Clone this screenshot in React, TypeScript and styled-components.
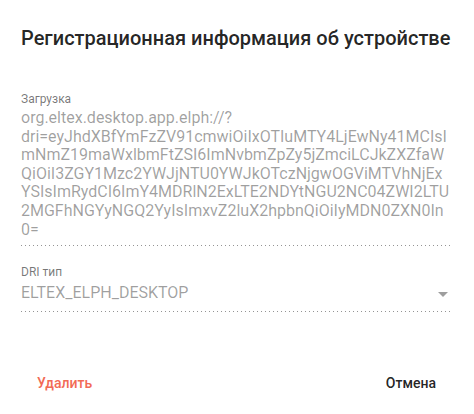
import React from "react";
import styled, { createGlobalStyle } from "styled-components";

const Global = createGlobalStyle`
  html, body { margin: 0; padding: 0; background: #fff; }
  body { font-family: Roboto, "Noto Sans", Arial, sans-serif; -webkit-font-smoothing: antialiased; }
`;

const Dialog = styled.div`
  width: 474px;
  box-sizing: border-box;
  padding: 22px 22px 13px 21px;
  display: flex;
  flex-direction: column;
  background: #fff;
  & > * { flex-shrink: 0; }
`;

const Title = styled.h2`
  margin: 0;
  font: 500 20px/32px Roboto, sans-serif;
  color: rgba(0, 0, 0, 0.87);
  white-space: nowrap;
`;

const Content = styled.div`
  display: block;
  margin-top: 38px;
`;

const Field = styled.div<{ $gap?: number }>`
  display: block;
  margin-top: ${(p) => p.$gap ?? 0}px;
`;

const Label = styled.div`
  font: 400 12px/15px Roboto, sans-serif;
  height: 15px;
  color: rgba(0, 0, 0, 0.54);
`;

const Value = styled.div<{ $pad: number }>`
  margin-top: 2px;
  padding-bottom: ${(p) => p.$pad}px;
  font-family: Roboto, sans-serif;
  font-size: 16px;
  line-height: 18.6px;
  color: rgba(0, 0, 0, 0.38);
  white-space: pre;
`;

const Line = styled.div`
  height: 18.6px;
`;

const SelectRow = styled.div`
  display: flex;
  align-items: center;
  justify-content: space-between;
  margin-top: 4px;
  padding-bottom: 8px;
  font-family: Roboto, sans-serif;
  font-size: 16px;
  line-height: 18.6px;
  color: rgba(0, 0, 0, 0.38);
`;

const Arrow = styled.span`
  width: 0;
  height: 0;
  margin-right: 4px;
  margin-top: 2px;
  border-left: 5px solid transparent;
  border-right: 5px solid transparent;
  border-top: 5px solid rgba(0, 0, 0, 0.38);
`;

const Underline = styled.div`
  height: 1px;
  background-image: linear-gradient(
    to right,
    rgba(0, 0, 0, 0.42) 0%,
    rgba(0, 0, 0, 0.42) 33%,
    transparent 0%
  );
  background-size: 4px 100%;
  background-repeat: repeat-x;
`;

const Actions = styled.div`
  display: flex;
  justify-content: space-between;
  margin-top: 53px;
`;

const Button = styled.button<{ $warn?: boolean }>`
  border: 0;
  background: transparent;
  padding: 0 16px;
  min-width: 64px;
  height: 36px;
  font: 500 14px/36px Roboto, sans-serif;
  color: ${(p) => (p.$warn ? "#f26a55" : "rgba(0, 0, 0, 0.87)")};
  cursor: pointer;
`;

const lines = [
  "org.eltex.desktop.app.elph://?",
  "dri=eyJhdXBfYmFzZV91cmwiOiIxOTIuMTY4LjEwNy41MCIsI",
  "mNmZ19maWxlbmFtZSI6ImNvbmZpZy5jZmciLCJkZXZfaW",
  "QiOiI3ZGY1Mzc2YWJjNTU0YWJkOTczNjgwOGViMTVhNjEx",
  "YSIsImRydCI6ImY4MDRlN2ExLTE2NDYtNGU2NC04ZWI2LTU",
  "2MGFhNGYyNGQ2YyIsImxvZ2luX2hpbnQiOiIyMDN0ZXN0In",
  "0=",
];

export default function App() {
  return (
    <>
      <Global />
      <Dialog>
        <Title>Регистрационная информация об устройстве</Title>
        <Content>
          <Field>
            <Label>Загрузка</Label>
            <Value $pad={6}>
              {lines.map((l) => (
                <Line key={l}>{l}</Line>
              ))}
            </Value>
            <Underline />
          </Field>
          <Field $gap={19}>
            <Label>DRI тип</Label>
            <SelectRow>
              <span>ELTEX_ELPH_DESKTOP</span>
              <Arrow />
            </SelectRow>
            <Underline />
          </Field>
        </Content>
        <Actions>
          <Button $warn>Удалить</Button>
          <Button>Отмена</Button>
        </Actions>
      </Dialog>
    </>
  );
}
